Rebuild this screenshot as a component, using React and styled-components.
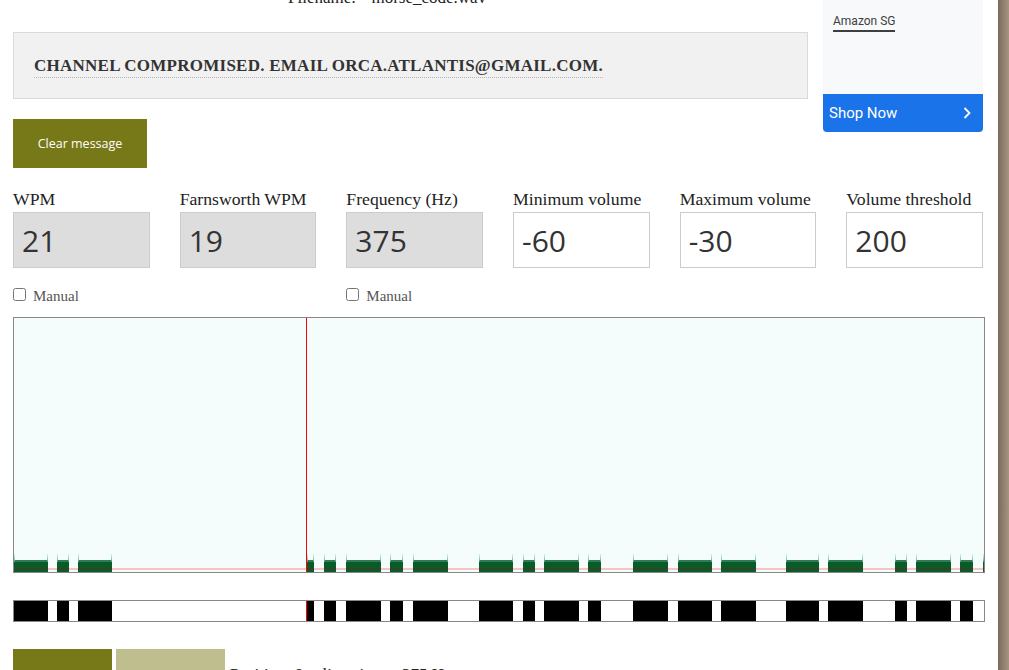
import React from "react";
import styled, { createGlobalStyle } from "styled-components";

const GlobalStyle = createGlobalStyle`
  html, body { margin: 0; padding: 0; }
  body {
    min-height: 100vh;
    background: linear-gradient(to right, #ffffff 0 998px, #7b6a5a 998px, #a69481 1009px);
    font-family: "Liberation Serif", "Times New Roman", serif;
    color: #222;
    overflow: hidden;
  }
`;

const Page = styled.div`
  width: 972px;
  padding: 0 13px 0 13px;
  margin-top: -12px;
  background: #fff;
`;

const TopRow = styled.div`
  display: flex;
  align-items: flex-start;
  gap: 15px;
  width: 970px;
`;

const MainCol = styled.div`
  flex: 1;
  min-width: 0;
`;

const Filename = styled.p`
  margin: 0 0 0 275px;
  font-size: 17px;
  line-height: 20px;
  color: #222;
  white-space: pre;
`;

const MessageBox = styled.div`
  margin-top: 24px;
  height: 65px;
  box-sizing: content-box;
  border: 1px solid #dadada;
  background: #f1f1f1;
  display: flex;
  align-items: center;
  padding: 0 20px;
`;

const MessageText = styled.span`
  font-weight: bold;
  font-size: 17px;
  letter-spacing: 0.25px;
  line-height: 20px;
  color: #333;
  text-transform: uppercase;
  border-bottom: 1px dotted #b8b8b8;
  padding-bottom: 1px;
  margin-top: 2px;
`;

const OliveButton = styled.button`
  border: none;
  border-radius: 0;
  margin: 0;
  padding: ${(p) => (p.$low ? "24px 0 0" : "0")};
  width: ${(p) => p.$w || 134}px;
  height: 49px;
  background: ${(p) => (p.$light ? "#bebe8e" : "#777817")};
  color: #fff;
  font-family: "Open Sans", "Noto Sans", sans-serif;
  font-size: 12.5px;
  cursor: pointer;
`;

const ClearRow = styled.div`
  margin-top: 20px;
`;

const Ad = styled.aside`
  width: 160px;
  height: 144px;
  flex: none;
  background: #f8f9fa;
  display: flex;
  flex-direction: column;
  font-family: Roboto, "Noto Sans", sans-serif;
`;

const AdBody = styled.div`
  flex: 1;
  padding: 22px 10px 0;
`;

const AdBrand = styled.span`
  font-size: 12px;
  line-height: 16px;
  color: #3c4043;
  border-bottom: 2px solid #3c4043;
  padding-bottom: 2px;
`;

const ShopNow = styled.div`
  height: 38px;
  background: #1a73e8;
  border-radius: 0 0 4px 4px;
  color: #fff;
  display: flex;
  align-items: center;
  justify-content: space-between;
  padding: 0 12px 0 6px;
  font-size: 15px;
`;

const Fields = styled.div`
  display: grid;
  grid-template-columns: repeat(6, 1fr);
  column-gap: 30px;
  width: 970px;
  margin-top: 21px;
`;

const Field = styled.label`
  display: flex;
  flex-direction: column;
  gap: 3px;
`;

const FieldLabel = styled.span`
  font-size: 17.7px;
  line-height: 20px;
  color: #222;
  white-space: nowrap;
`;

const NumberInput = styled.input`
  box-sizing: border-box;
  width: 100%;
  height: 56px;
  margin: 0;
  border: 1px solid #cccccc;
  border-radius: 0;
  padding: 0 8px;
  background: ${(p) => (p.disabled ? "#dddddd" : "#ffffff")};
  color: #333;
  font-family: "Open Sans", "Noto Sans", sans-serif;
  font-size: 30px;
  outline: none;
  &:disabled { color: #333; opacity: 1; -webkit-text-fill-color: #333; }
`;

const ChecksRow = styled.div`
  display: grid;
  grid-template-columns: repeat(6, 1fr);
  column-gap: 30px;
  width: 970px;
  margin-top: 20px;
`;

const CheckLabel = styled.label`
  display: flex;
  align-items: baseline;
  gap: 7px;
  font-size: 15px;
  line-height: 17px;
  color: #555;
`;

const Check = styled.input`
  width: 13px;
  height: 13px;
  margin: 0;
`;

const Spectro = styled.div`
  margin-top: 12px;
  border: 1px solid #888;
  background: #f5fcfc;
  height: 254px;
  width: 970px;
  svg { display: block; }
`;

const MorseBar = styled.div`
  margin-top: 27px;
  border: 1px solid #888;
  background: #fff;
  height: 20px;
  width: 970px;
  svg { display: block; }
`;

const Controls = styled.div`
  margin-top: 27px;
  display: flex;
  align-items: flex-start;
  gap: 4px;
`;

const Status = styled.span`
  font-size: 17px;
  line-height: 20px;
  margin: 16px 0 0 1px;
  color: #222;
  white-space: nowrap;
`;

const SEGMENTS = [
  [14, 48], [57, 69], [78, 112], [307, 314], [324, 336], [346, 381], [390, 403],
  [413, 448], [479, 513], [523, 535], [544, 579], [588, 601], [633, 668], [678, 712],
  [721, 756], [786, 819], [828, 863], [895, 907], [916, 951], [960, 973], [983, 984],
];
const X0 = 14;
const CURSOR = 306 - X0;

function Spectrogram() {
  return (
    <Spectro>
      <svg width="970" height="254" viewBox="0 0 970 254" shapeRendering="crispEdges">
        <defs>
          <linearGradient id="spike" x1="0" y1="0" x2="0" y2="1">
            <stop offset="0" stopColor="#d6f5ea" />
            <stop offset="0.6" stopColor="#8fcfb0" />
            <stop offset="1" stopColor="#3f946a" />
          </linearGradient>
        </defs>
        <rect x="0" y="250" width="970" height="2" fill="#f7c4c4" />
        {SEGMENTS.map(([a, b]) => {
          const x = a - X0;
          const w = b - a;
          return (
            <g key={a}>
              <rect x={x} y="242" width={w} height="2" fill="#2f7d52" />
              <rect x={x} y="244" width={w} height="10" fill="#0b5a2a" />
              <rect x={x} y="250" width={w} height="1" fill="#4a3a1c" />
              <rect x={x} y="236" width="1" height="8" fill="url(#spike)" />
              {w > 2 && <rect x={x + w - 1} y="236" width="1" height="8" fill="url(#spike)" />}
            </g>
          );
        })}
        <rect x={CURSOR} y="0" width="1" height="254" fill="#ff0000" />
      </svg>
    </Spectro>
  );
}

function Morse() {
  return (
    <MorseBar>
      <svg width="970" height="20" viewBox="0 0 970 20" shapeRendering="crispEdges">
        {SEGMENTS.filter(([a, b]) => b <= 973).map(([a, b]) => (
          <rect key={a} x={a - X0} y="0" width={b - a} height="20" fill="#000" />
        ))}
        <rect x={CURSOR} y="0" width="1" height="20" fill="#ff0000" />
      </svg>
    </MorseBar>
  );
}

const FIELDS = [
  { label: "WPM", value: "21", disabled: true, manual: true },
  { label: "Farnsworth WPM", value: "19", disabled: true },
  { label: "Frequency (Hz)", value: "375", disabled: true, manual: true },
  { label: "Minimum volume", value: "-60" },
  { label: "Maximum volume", value: "-30" },
  { label: "Volume threshold", value: "200" },
];

export default function App() {
  return (
    <>
      <GlobalStyle />
      <Page>
        <TopRow>
          <MainCol>
            <Filename>{'Filename:  "morse_code.wav"'}</Filename>
            <MessageBox>
              <MessageText>Channel compromised. Email orca.atlantis@gmail.com.</MessageText>
            </MessageBox>
            <ClearRow>
              <OliveButton>Clear message</OliveButton>
            </ClearRow>
          </MainCol>
          <Ad>
            <AdBody>
              <AdBrand>Amazon SG</AdBrand>
            </AdBody>
            <ShopNow>
              <span>Shop Now</span>
              <svg width="8" height="12" viewBox="0 0 8 12">
                <polyline points="1.5,1 6.5,6 1.5,11" fill="none" stroke="#fff" strokeWidth="1.8" />
              </svg>
            </ShopNow>
          </Ad>
        </TopRow>

        <Fields>
          {FIELDS.map((f) => (
            <Field key={f.label}>
              <FieldLabel>{f.label}</FieldLabel>
              <NumberInput type="text" defaultValue={f.value} disabled={f.disabled} />
            </Field>
          ))}
        </Fields>

        <ChecksRow>
          {FIELDS.map((f) =>
            f.manual ? (
              <CheckLabel key={f.label}>
                <Check type="checkbox" />
                Manual
              </CheckLabel>
            ) : (
              <span key={f.label} />
            )
          )}
        </ChecksRow>

        <Spectrogram />
        <Morse />

        <Controls>
          <OliveButton $w={99} $low>Play</OliveButton>
          <OliveButton $w={109} $light $low>Stop</OliveButton>
          <Status>Position: 0 s, listening at 375 Hz</Status>
        </Controls>
      </Page>
    </>
  );
}
